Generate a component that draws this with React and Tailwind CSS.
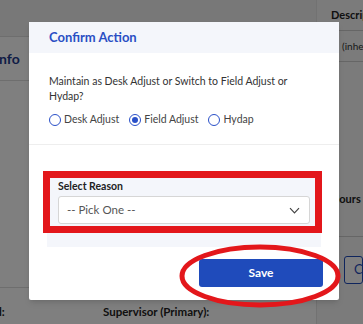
import React from 'react';

const font = { fontFamily: 'Lato, "Open Sans", Arial, sans-serif' };

const Radio = ({ label, checked }) => (
    <label className="flex items-center gap-[3px]">
        <span className="w-[12px] h-[12px] rounded-full border-[1.5px] border-[#2a50c8] bg-white flex items-center justify-center">
            {checked && <span className="w-[6px] h-[6px] rounded-full bg-[#2a50c8]" />}
        </span>
        <span className="text-[10.5px] text-[#444]">{label}</span>
    </label>
);

/**
 * Background page (dimmed by the overlay)
 */
const PageBehind = () => (
    <div className="h-[324px] flex bg-white overflow-hidden">
        {/* Main column */}
        <div className="w-[316px] shrink-0 flex flex-col">
            <div className="h-[37px] shrink-0 bg-[#f1f1f1] border-b border-[#ddd]" />
            <div className="h-[44px] shrink-0 flex items-center border-b border-[#ddd] overflow-hidden">
                <span className="ml-[-5px] text-[14px] font-bold text-[#1d3a8c]">Info</span>
            </div>
            <div className="h-[207px] shrink-0 border-b border-[#ddd]" />
            <div className="h-[48px] shrink-0 flex items-center text-[11.5px] font-bold text-[#222]">
                <span className="ml-[-8px] w-[111px]">Id:</span>
                <span>Supervisor (Primary):</span>
            </div>
        </div>
        {/* Right column */}
        <div className="flex-1 min-w-0 flex flex-col border-l border-[#e5e5e5] bg-[#f6f6f6]">
            <div className="h-[31px] shrink-0 flex items-center pl-[14px] border-b border-[#ccc] text-[11px] font-bold text-[#222] whitespace-nowrap overflow-hidden">
                Description
            </div>
            <div className="h-[31px] shrink-0 flex items-center pl-[25px] border-b border-[#ccc] text-[10px] text-[#333] whitespace-nowrap overflow-hidden">
                (inherited)
            </div>
            <div className="h-[100px] shrink-0" />
            <div className="h-[75px] shrink-0 flex items-center pl-[14px] border-b border-[#ccc] text-[11px] font-bold text-[#222] whitespace-nowrap overflow-hidden">
                Hours (
            </div>
            <div className="h-[19px] shrink-0" />
            <div className="h-[28px] shrink-0 ml-[27px] flex items-center pl-[9px] border border-[#1f4bbb] rounded-[3px] text-[13px] text-[#1f4bbb] bg-white">
                C
            </div>
        </div>
    </div>
);

export default function App() {
    return (
        <div className="relative w-[363px] h-[324px] overflow-hidden" style={font}>
            <PageBehind />

            {/* Overlay */}
            <div className="absolute inset-0 bg-black/50" />

            {/* Modal */}
            <div className="absolute left-[29px] top-[22px] w-[310px] h-[278px] bg-white rounded-[2px] shadow-md flex flex-col">
                <div className="h-[31px] bg-[#f4f6fb] flex items-center pl-[20px]">
                    <h2 className="text-[13px] font-bold text-[#2a4fc4]">Confirm Action</h2>
                </div>

                <div className="px-[20px] pt-[21px] pb-[18px] border-b border-[#eee]">
                    <p className="text-[10.5px] leading-[15px] text-[#333] w-[250px]">
                        Maintain as Desk Adjust or Switch to Field Adjust or Hydap?
                    </p>
                    <div className="flex items-center gap-[10px] mt-[9px] h-[13px]">
                        <Radio label="Desk Adjust" />
                        <Radio label="Field Adjust" checked />
                        <Radio label="Hydap" />
                    </div>
                </div>

                <div className="mx-[18px] mt-[26px] h-[76px] bg-[#f4f6fb] px-[11px] pt-[7px]">
                    <div className="text-[10.5px] font-bold text-[#222] leading-[16px]">Select Reason</div>
                    <div className="mt-[2px] h-[28px] rounded-[3px] border border-[#d6d6d6] bg-white flex items-center justify-between pl-[8px] pr-[9px]">
                        <span className="text-[11.5px] text-[#555]">-- Pick One --</span>
                        <svg width="11" height="7" viewBox="0 0 11 7" fill="none" stroke="#444" strokeWidth="1.2">
                            <polyline points="1 1.2 5.5 5.8 10 1.2" />
                        </svg>
                    </div>
                </div>

                <div className="flex justify-end pr-[16px] mt-[12px]">
                    <button className="w-[124px] h-[28px] rounded-[3px] bg-[#1f4bbb] text-white text-[12px] font-bold">
                        Save
                    </button>
                </div>
            </div>

            {/* Red annotations */}
            <div className="absolute left-[43px] top-[171px] w-[279px] h-[62px] border-[7px] border-[#e3171b]" />
            <svg className="absolute left-[178px] top-[243px]" width="164" height="66" viewBox="0 0 164 66">
                <ellipse cx="82" cy="33" rx="78" ry="29" fill="none" stroke="#e3171b" strokeWidth="5" />
            </svg>
        </div>
    );
}
